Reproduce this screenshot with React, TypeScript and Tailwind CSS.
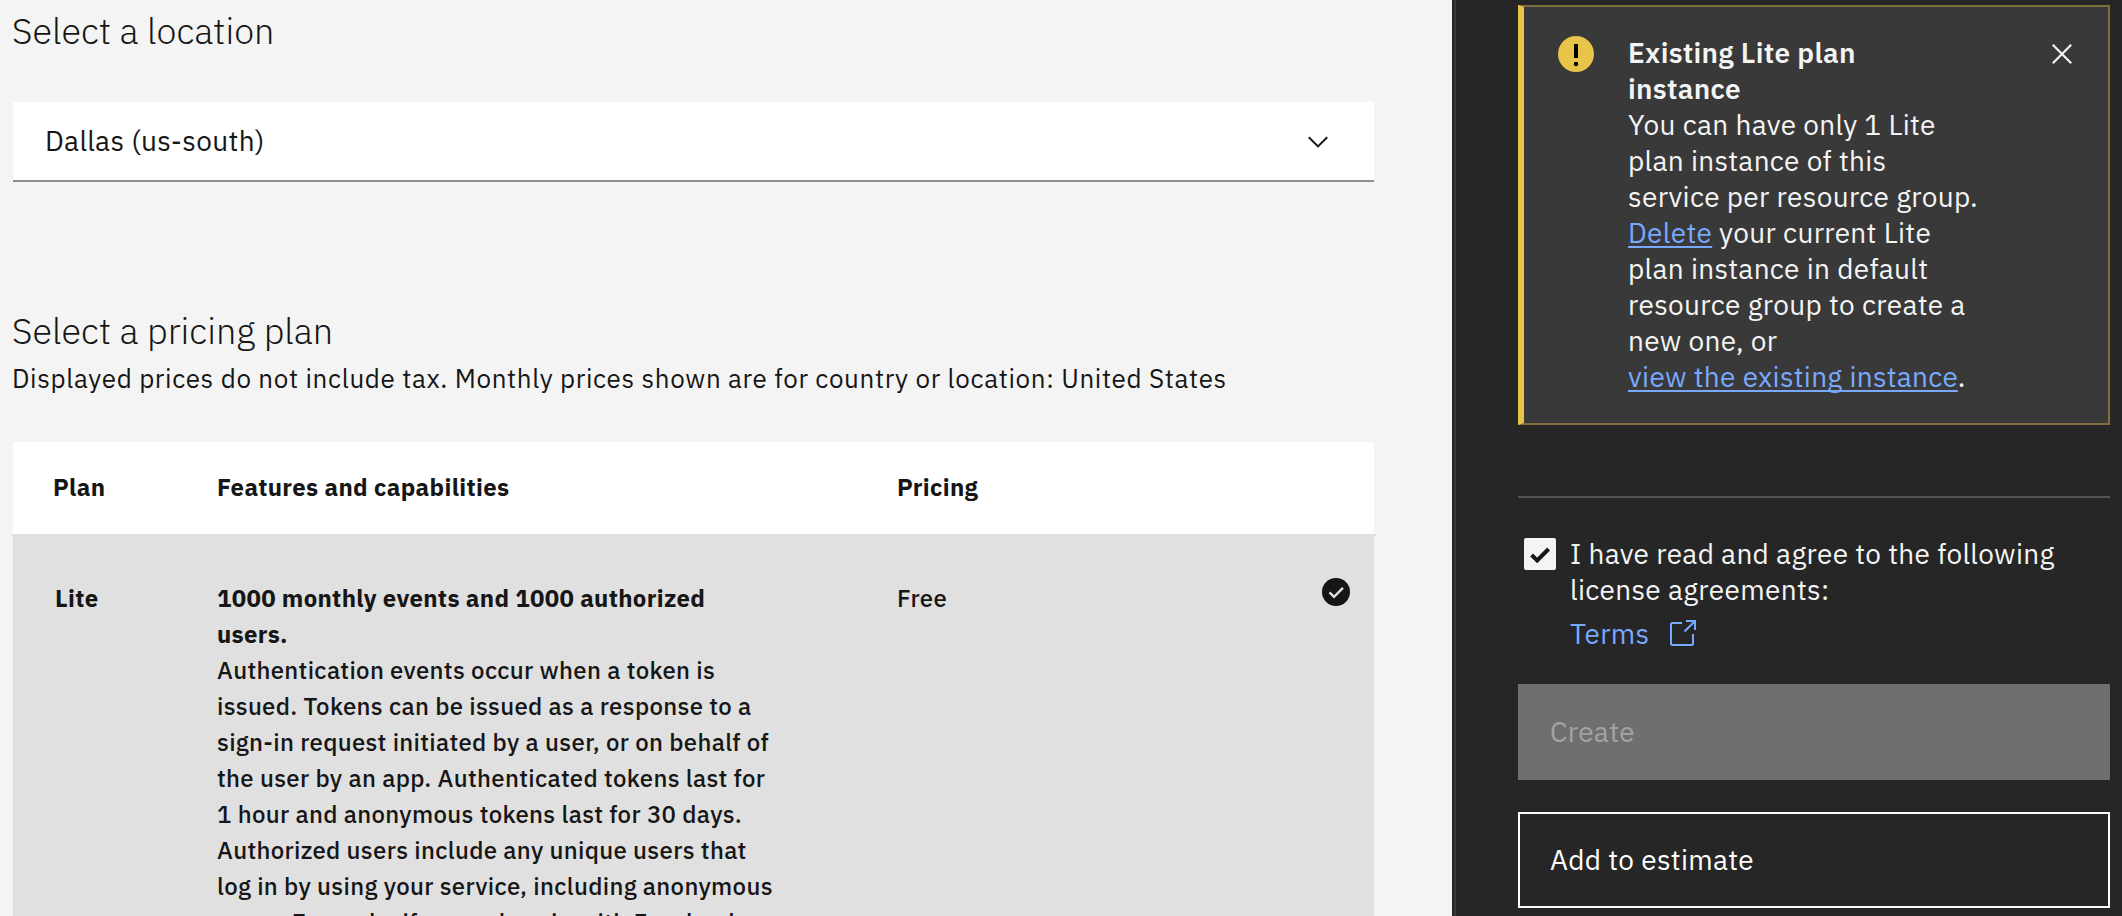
import { Fragment } from "react";

const featureLines = [
  "Authentication events occur when a token is",
  "issued. Tokens can be issued as a response to a",
  "sign-in request initiated by a user, or on behalf of",
  "the user by an app. Authenticated tokens last for",
  "1 hour and anonymous tokens last for 30 days.",
  "Authorized users include any unique users that",
  "log in by using your service, including anonymous",
  "users. Example, if a user logs in with Facebook",
];

function LocationSelect() {
  return (
    <button className="mt-[46px] flex h-[80px] w-[1361px] items-center justify-between border-b-2 border-[#8d8d8d] bg-white pr-[46px] pl-[32px] text-left">
      <span className="text-[28px] leading-[36px] tracking-[0.32px]">Dallas (us-south)</span>
      <svg className="mt-[2px]" width="20" height="12" viewBox="0 0 20 12" fill="none" stroke="#161616" strokeWidth="2">
        <path d="M0.8 1.2 10 10.4 19.2 1.2" />
      </svg>
    </button>
  );
}

function PlanTable() {
  return (
    <div className="mt-[45px] w-[1363px]">
      <div className="ml-px flex h-[92px] w-[1361px] items-center bg-white pb-[2px] text-[24px] leading-[36px] font-bold tracking-[0.32px]">
        <div className="w-[204px] pl-[40px]">Plan</div>
        <div className="w-[680px]">Features and capabilities</div>
        <div>Pricing</div>
      </div>
      <div className="-mr-px h-[2px] w-[1364px] bg-[#e0e0e0]" />
      <div className="ml-px flex h-[600px] w-[1361px] items-start bg-[#e0e0e0] pt-[44px] text-[24px] leading-[36px] font-medium tracking-[0.32px]">
        <div className="w-[204px] pl-[42px] font-bold">Lite</div>
        <div className="w-[680px] whitespace-nowrap">
          <div className="font-bold">
            1000 monthly events and 1000 authorized
            <br />
            users.
          </div>
          {featureLines.map((line) => (
            <Fragment key={line}>
              {line}
              <br />
            </Fragment>
          ))}
        </div>
        <div className="grow">Free</div>
        <svg className="-mt-[2px] mr-[24px]" width="28" height="28" viewBox="0 0 28 28" fill="none">
          <circle cx="14" cy="14" r="14" fill="#161616" />
          <path d="M7.5 14.3 12 18.8 21 9.8" stroke="#e0e0e0" strokeWidth="2.4" />
        </svg>
      </div>
    </div>
  );
}

function Notification() {
  return (
    <div className="flex h-[420px] w-[592px] border-2 border-l-6 border-[#7e6f3d] border-l-[#e8c44b] bg-[#393939] pt-[28px] text-[28px] leading-[36px] tracking-[0.32px]">
      <svg className="mt-px ml-[34px] shrink-0" width="36" height="36" viewBox="0 0 36 36">
        <circle cx="18" cy="18" r="18" fill="#e8c44b" />
        <rect x="16" y="8" width="4" height="14" fill="#000" />
        <circle cx="18" cy="28" r="2.2" fill="#000" />
      </svg>
      <div className="ml-[34px] w-[400px] whitespace-nowrap">
        <div className="font-semibold">
          Existing Lite plan
          <br />
          instance
        </div>
        You can have only 1 Lite
        <br />
        plan instance of this
        <br />
        service per resource group.
        <br />
        <a className="text-[#78a9ff] underline decoration-2 underline-offset-[3px] [text-decoration-skip-ink:none]">Delete</a> your current Lite
        <br />
        plan instance in default
        <br />
        resource group to create a
        <br />
        new one, or
        <br />
        <a className="text-[#78a9ff] underline decoration-2 underline-offset-[3px] [text-decoration-skip-ink:none]">view the existing instance</a>.
      </div>
      <svg className="mt-[9px] ml-[24px] shrink-0" width="20" height="20" viewBox="0 0 20 20" stroke="#f4f4f4" strokeWidth="2.2">
        <path d="M0.8 0.8 19.2 19.2M19.2 0.8 0.8 19.2" />
      </svg>
    </div>
  );
}

function Sidebar() {
  return (
    <aside className="flex h-[916px] w-[670px] shrink-0 flex-col bg-[#262626] text-[#f4f4f4]">
      <div className="flex h-full">
        <div className="mr-[62px] ml-[2px] w-[2px] bg-[#393939]" />
        <div className="w-[592px] pt-[5px]">
          <Notification />
          <div className="mt-[71px] h-[2px] bg-[#525252]" />
          <div className="mt-[38px] flex pl-[6px] text-[28px] leading-[36px] tracking-[0.32px]">
            <svg className="mt-[2px] shrink-0" width="32" height="32" viewBox="0 0 32 32" fill="none">
              <rect width="32" height="32" rx="2" fill="#f4f4f4" />
              <path d="M7.6 17 13.2 22.4 24.6 11" stroke="#161616" strokeWidth="4" />
            </svg>
            <div className="ml-[14px] whitespace-nowrap">
              I have read and agree to the following
              <br />
              license agreements:
              <div className="mt-[8px] flex text-[#78a9ff]">
                Terms
                <svg className="mt-[4px] ml-[20px]" width="26" height="26" viewBox="0 0 26 26" fill="none" stroke="#78a9ff" strokeWidth="2">
                  <path d="M12 3H2.5Q1 3 1 4.5V23.500Q1 25 2.500 25H21.500Q23 25 23 23.500V14" />
                  <path d="M16 1H25V10" />
                  <path d="M25 1 14.500 11.500" />
                </svg>
              </div>
            </div>
          </div>
          <button className="mt-[32px] flex h-[96px] w-full items-center bg-[#6f6f6f] pl-[32px] text-[28px] leading-[36px] tracking-[0.32px] text-[#a3a3a3]">Create</button>
          <button className="mt-[32px] flex h-[96px] w-full items-center border-2 border-white pl-[30px] text-[28px] leading-[36px] tracking-[0.32px] text-white">Add to estimate</button>
        </div>
      </div>
    </aside>
  );
}

export default function App() {
  return (
    <div className="flex h-[916px] w-[2122px] overflow-hidden bg-[#f4f4f4] font-['IBM_Plex_Sans','Roboto',sans-serif] text-[#161616]">
      <main className="w-[1452px] shrink-0 pl-[12px]">
        <h2 className="-mt-px h-[57px] pt-[8px] text-[36px] leading-[48px] font-light">Select a location</h2>
        <div className="ml-px">
          <LocationSelect />
        </div>
        <h2 className="mt-[125px] text-[36px] leading-[48px] font-light">Select a pricing plan</h2>
        <p className="mt-[4px] text-[26px] leading-[38px] tracking-[0.63px]">
          Displayed prices do not include tax. Monthly prices shown are for country or location: United States
        </p>
        <PlanTable />
      </main>
      <Sidebar />
    </div>
  );
}
